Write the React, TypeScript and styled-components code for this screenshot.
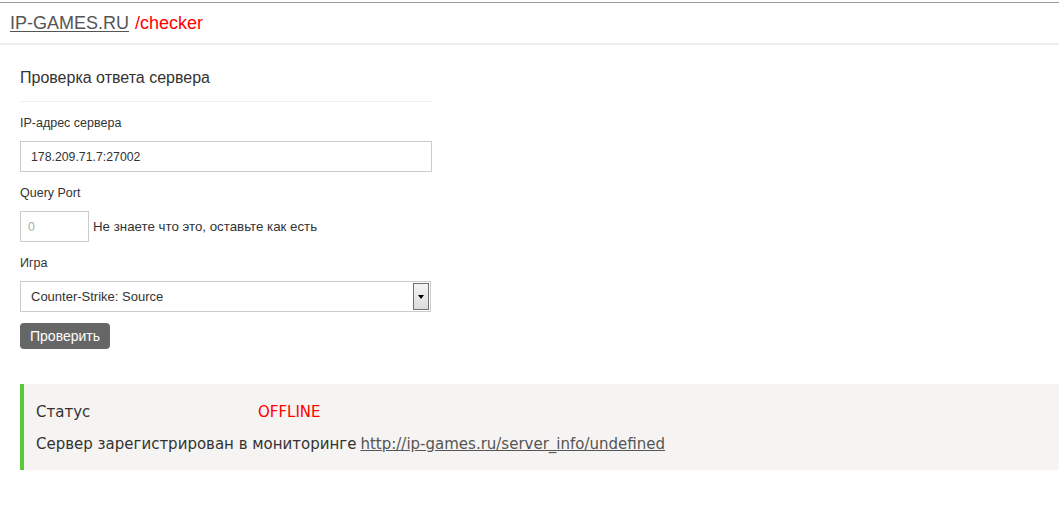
import React from 'react';
import styled, { createGlobalStyle } from 'styled-components';

const GlobalStyle = createGlobalStyle`
  html, body {
    margin: 0;
    padding: 0;
    background: #fff;
    font-family: "Liberation Sans", Arial, sans-serif;
    color: #333;
  }
`;

const Page = styled.div`
  border-top: 1px solid #9a9a9a;
  margin-top: 2px;
`;

const Header = styled.header`
  height: 40px;
  display: flex;
  align-items: center;
  padding: 0 10px;
  border-bottom: 2px solid #eee;
  font-size: 18px;
`;

const Brand = styled.a`
  color: #555;
  text-decoration: underline;
  text-underline-offset: 2px;
`;

const Path = styled.span`
  color: #f00;
  margin-left: 6px;
`;

const Form = styled.form`
  width: 412px;
  padding: 23px 0 0 20px;
  display: flex;
  flex-direction: column;
`;

const Title = styled.h3`
  margin: 0;
  font-size: 16px;
  font-weight: normal;
  color: #333;
  line-height: 20px;
  padding-bottom: 13px;
  border-bottom: 1px solid #eee;
`;

const Label = styled.label`
  font-size: 12.5px;
  color: #333;
  line-height: 16px;
  margin: 13px 0 10px;
`;

const TextInput = styled.input<{ $w?: string }>`
  box-sizing: border-box;
  width: ${p => p.$w || '412px'};
  height: 31px;
  border: 1px solid #ccc;
  padding: 0 10px;
  font-family: "Liberation Sans", Arial, sans-serif;
  font-size: 12.3px;
  color: #333;
  outline: none;
  &::placeholder {
    color: #aaa;
  }
`;

const Row = styled.div`
  display: flex;
  align-items: center;
  gap: 4px;
`;

const Hint = styled.span`
  font-size: 13.3px;
  color: #333;
`;

const SelectBox = styled.div`
  position: relative;
  box-sizing: border-box;
  width: 411px;
  height: 31px;
  border: 1px solid #ccc;
  display: flex;
  align-items: center;
  padding: 0 10px;
  font-size: 13px;
  color: #333;
`;

const DropButton = styled.span`
  position: absolute;
  top: 1px;
  right: 1px;
  bottom: 1px;
  width: 16px;
  box-sizing: border-box;
  border: 1px solid #707070;
  background: linear-gradient(#f4f4f4, #dcdcdc);
  display: flex;
  align-items: center;
  justify-content: center;
  &::after {
    content: '';
    border-left: 3px solid transparent;
    border-right: 3px solid transparent;
    border-top: 4px solid #000;
  }
`;

const Button = styled.button`
  align-self: flex-start;
  margin-top: 11px;
  height: 26px;
  padding: 0 10px;
  border: none;
  border-radius: 4px;
  background: #666;
  color: #fff;
  font-family: "Liberation Sans", Arial, sans-serif;
  font-size: 14px;
`;

const StatusPanel = styled.section`
  margin: 35px 0 0 20px;
  background: #f5f4f2;
  border-left: 4px solid #5cc93a;
  padding: 18px 0 16px 12px;
  font-family: "DejaVu Sans", Verdana, sans-serif;
  font-size: 15px;
  color: #333;
  display: flex;
  flex-direction: column;
  gap: 12px;
`;

const StatusRow = styled.div`
  display: flex;
  line-height: 20px;
`;

const StatusKey = styled.span`
  width: 222px;
`;

const Offline = styled.span`
  color: #f00;
`;

const Link = styled.a`
  color: #555;
  text-decoration: underline;
  margin-left: 4px;
`;

export default function App() {
  return (
    <Page>
      <GlobalStyle />
      <Header>
        <Brand>IP-GAMES.RU</Brand>
        <Path>/checker</Path>
      </Header>
      <Form onSubmit={e => e.preventDefault()}>
        <Title>Проверка ответа сервера</Title>
        <Label>IP-адрес сервера</Label>
        <TextInput defaultValue="178.209.71.7:27002" />
        <Label>Query Port</Label>
        <Row>
          <TextInput $w="69px" placeholder="0" style={{ paddingLeft: 7 }} />
          <Hint>Не знаете что это, оставьте как есть</Hint>
        </Row>
        <Label>Игра</Label>
        <SelectBox>
          Counter-Strike: Source
          <DropButton />
        </SelectBox>
        <Button type="submit">Проверить</Button>
      </Form>
      <StatusPanel>
        <StatusRow>
          <StatusKey>Статус</StatusKey>
          <Offline>OFFLINE</Offline>
        </StatusRow>
        <StatusRow>
          Сервер зарегистрирован в мониторинге
          <Link>http://ip-games.ru/server_info/undefined</Link>
        </StatusRow>
      </StatusPanel>
    </Page>
  );
}
